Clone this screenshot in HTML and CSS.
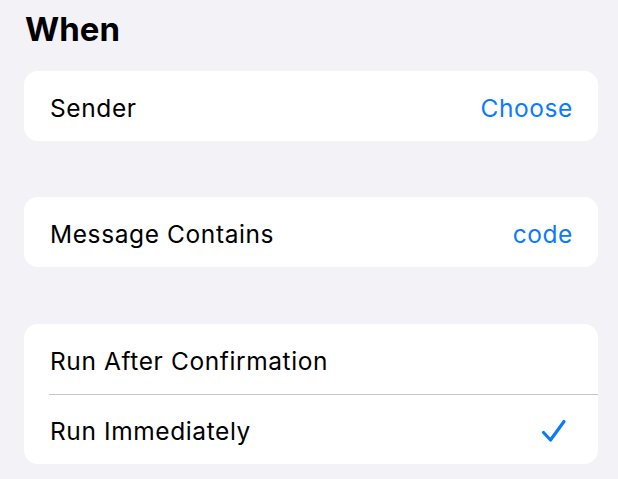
FILE: index.html
```html
<!DOCTYPE html>
<html>
<head>
<meta charset="utf-8">
<link rel="stylesheet" href="styles.css">
</head>
<body>
<main class="page">
  <h1 class="title">When</h1>
  <section class="card">
    <div class="row"><span class="label">Sender</span><span class="value">Choose</span></div>
  </section>
  <section class="card">
    <div class="row"><span class="label">Message Contains</span><span class="value">code</span></div>
  </section>
  <section class="card last">
    <div class="row"><span class="label">Run After Confirmation</span></div>
    <div class="row divided"><span class="label">Run Immediately</span>
      <svg class="check" width="26" height="24" viewBox="0 0 26 24"><path d="M2.5 13.5 L9.5 21 L23 2.5" fill="none" stroke="#0a7aff" stroke-width="3.2" stroke-linecap="round" stroke-linejoin="round"/></svg>
    </div>
  </section>
</main>
</body>
</html>
```

FILE: styles.css
```css
html, body {
  margin: 0;
  padding: 0;
  background: #f2f2f7;
  font-family: Inter, "Liberation Sans", sans-serif;
}
.page {
  padding: 9px 20px 0 24px;
  display: flex;
  flex-direction: column;
  gap: 56px;
}
.title {
  margin: 0 0 -34px 1px;
  font-size: 33px;
  font-weight: 700;
  line-height: 40px;
  color: #000;
}
.card {
  background: #fff;
  border-radius: 14px;
  overflow: hidden;
}
.card.last {
  margin-top: 1px;
}
.row {
  height: 70px;
  box-sizing: border-box;
  display: flex;
  align-items: center;
  justify-content: space-between;
  padding: 4px 26px 0 26px;
  position: relative;
}
.divided::before {
  content: "";
  position: absolute;
  left: 25px;
  right: 0;
  top: 0;
  border-top: 1px solid #c6c6c8;
}
.label,
.value {
  font-size: 24.5px;
  letter-spacing: 0.6px;
}
.label {
  color: #000;
}
.value {
  color: #0a7aff;
  margin-right: -1px;
}
.check {
  margin-right: 5px;
}
```
